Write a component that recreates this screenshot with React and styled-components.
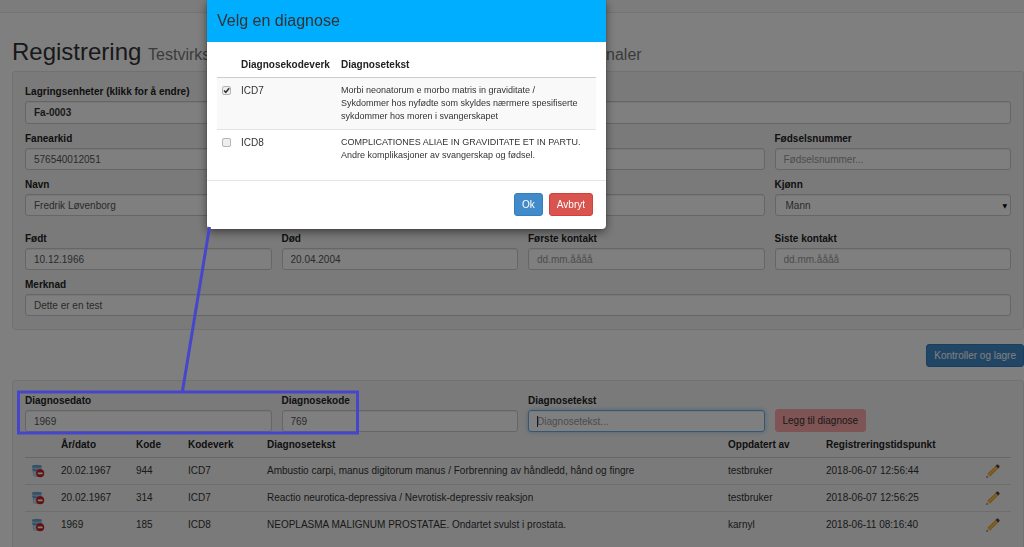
import React from 'react';
import styled, { createGlobalStyle, css } from 'styled-components';

const diagnoses = [
  {
    id: 1,
    date: '20.02.1967',
    code: '944',
    system: 'ICD7',
    text: 'Ambustio carpi, manus digitorum manus / Forbrenning av håndledd, hånd og fingre',
    user: 'testbruker',
    time: '2018-06-07 12:56:44',
  },
  {
    id: 2,
    date: '20.02.1967',
    code: '314',
    system: 'ICD7',
    text: 'Reactio neurotica-depressiva / Nevrotisk-depressiv reaksjon',
    user: 'testbruker',
    time: '2018-06-07 12:56:25',
  },
  {
    id: 3,
    date: '1969',
    code: '185',
    system: 'ICD8',
    text: 'NEOPLASMA MALIGNUM PROSTATAE. Ondartet svulst i prostata.',
    user: 'karnyl',
    time: '2018-06-11 08:16:40',
  },
];

const choices = [
  {
    system: 'ICD7',
    lines: [
      'Morbi neonatorum e morbo matris in graviditate /',
      'Sykdommer hos nyfødte som skyldes nærmere spesifiserte',
      'sykdommer hos moren i svangerskapet',
    ],
    checked: true,
  },
  {
    system: 'ICD8',
    lines: ['COMPLICATIONES ALIAE IN GRAVIDITATE ET IN PARTU.', 'Andre komplikasjoner av svangerskap og fødsel.'],
    checked: false,
  },
];

const TextField = ({ id, label, span, strong, focused, ...rest }) => (
  <Field $span={span}>
    <Label htmlFor={id}>{label}</Label>
    <InputWrap $caret={focused}>
      <Input id={id} $strong={strong} $focused={focused} {...rest} />
    </InputWrap>
  </Field>
);

const DeleteIcon = () => (
  <svg width='14' height='14' viewBox='0 0 14 14' aria-hidden='true'>
    <path d='M1 2.3 C1 .4 10.8 .4 10.8 2.3 L10.2 11.5 C10 13.4 2.4 13.4 2.2 11.8 Z' fill='#a9c6d8' />
    <ellipse cx='5.9' cy='2.3' rx='4.9' ry='1.5' fill='#6aa6d0' />
    <path d='M1.4 4.8 C4 5.9 8 5.9 10.6 4.8 V6.4 C8 7.4 4 7.4 1.6 6.4 Z' fill='#5f9bc8' />
    <path d='M3.4 7.8 L4 12' stroke='#dce9f0' strokeWidth='1' />
    <circle cx='9.2' cy='9.3' r='4' fill='#cc2222' />
    <rect x='6.8' y='8.4' width='4.8' height='1.8' rx='.4' fill='#fff' />
  </svg>
);

const PencilIcon = () => (
  <svg width='14' height='14' viewBox='0 0 14 14' aria-hidden='true'>
    <path d='M.3 13.7 L1.4 9.8 L4.2 12.6 Z' fill='#f0dcc0' />
    <path d='M.3 13.7 L.8 12 L2 13.2 Z' fill='#333' />
    <path d='M1.4 9.8 L9.5 1.9 L12.2 4.6 L4.2 12.6 Z' fill='#eda52e' />
    <path d='M2.3 10.7 L10.4 2.8 L11.3 3.7 L3.2 11.6 Z' fill='#ffc95c' />
    <path d='M9.5 1.9 L10.9 .6 Q11.6 .1 12.3 .8 L13.3 1.8 Q14 2.5 13.4 3.3 L12.2 4.6 Z' fill='#5b4145' />
  </svg>
);

const App = () => {
  return (
    <>
      <GlobalStyle />
      <Page>
        <TopBar />
        <Content>
          <Title>
            Registrering <small>Testvirksomhet for registrering og avlevering av eldre pasientjournaler</small>
          </Title>
          <Panel as='form'>
            <FieldGrid>
              <TextField id='units' label='Lagringsenheter (klikk for å endre)' span={4} strong defaultValue='Fa-0003' />
              <TextField id='fileId' label='Fanearkid' span={3} defaultValue='576540012051' />
              <TextField id='birthNo' label='Fødselsnummer' placeholder='Fødselsnummer...' />
              <TextField id='name' label='Navn' span={3} defaultValue='Fredrik Løvenborg' />
              <Field>
                <Label htmlFor='gender'>Kjønn</Label>
                <SelectWrap>
                  <Select id='gender' defaultValue='Mann'>
                    <option>Mann</option>
                    <option>Kvinne</option>
                  </Select>
                </SelectWrap>
              </Field>
            </FieldGrid>
            <FieldGrid $spaced>
              <TextField id='born' label='Født' defaultValue='10.12.1966' />
              <TextField id='dead' label='Død' defaultValue='20.04.2004' />
              <TextField id='first' label='Første kontakt' placeholder='dd.mm.åååå' />
              <TextField id='last' label='Siste kontakt' placeholder='dd.mm.åååå' />
              <TextField id='note' label='Merknad' span={4} defaultValue='Dette er en test' />
            </FieldGrid>
          </Panel>
          <Actions>
            <Button $kind='primary'>Kontroller og lagre</Button>
          </Actions>
          <Panel>
            <FieldGrid>
              <TextField id='diagDate' label='Diagnosedato' defaultValue='1969' />
              <TextField id='diagCode' label='Diagnosekode' defaultValue='769' />
              <TextField id='diagText' label='Diagnosetekst' placeholder='Diagnosetekst...' focused />
              <AddCell>
                <Button $kind='add'>Legg til diagnose</Button>
              </AddCell>
            </FieldGrid>
            <DiagnosisTable>
              <colgroup>
                <col width='31' />
                <col width='75' />
                <col width='52' />
                <col width='79' />
                <col />
                <col width='98' />
                <col width='159' />
                <col width='31' />
              </colgroup>
              <thead>
                <tr>
                  <th />
                  <th>År/dato</th>
                  <th>Kode</th>
                  <th>Kodeverk</th>
                  <th>Diagnosetekst</th>
                  <th>Oppdatert av</th>
                  <th>Registreringstidspunkt</th>
                  <th />
                </tr>
              </thead>
              <tbody>
                {diagnoses.map((d) => (
                  <tr key={d.id}>
                    <td>
                      <IconButton aria-label='Slett'>
                        <DeleteIcon />
                      </IconButton>
                    </td>
                    <td>{d.date}</td>
                    <td>{d.code}</td>
                    <td>{d.system}</td>
                    <td>{d.text}</td>
                    <td>{d.user}</td>
                    <td>{d.time}</td>
                    <td>
                      <IconButton aria-label='Rediger'>
                        <PencilIcon />
                      </IconButton>
                    </td>
                  </tr>
                ))}
              </tbody>
            </DiagnosisTable>
          </Panel>
        </Content>
      </Page>
      <Backdrop>
        <Dialog role='dialog' aria-labelledby='dialogTitle'>
          <DialogHeader>
            <h4 id='dialogTitle'>Velg en diagnose</h4>
          </DialogHeader>
          <DialogBody>
            <ChoiceTable>
              <colgroup>
                <col width='19' />
                <col width='100' />
                <col />
              </colgroup>
              <thead>
                <tr>
                  <th />
                  <th>Diagnosekodeverk</th>
                  <th>Diagnosetekst</th>
                </tr>
              </thead>
              <tbody>
                {choices.map((c) => (
                  <tr key={c.system}>
                    <td>
                      <Checkbox type='checkbox' id={c.system} defaultChecked={c.checked} />
                    </td>
                    <td>
                      <label htmlFor={c.system}>{c.system}</label>
                    </td>
                    <td>
                      {c.lines.map((line) => (
                        <ChoiceLine key={line}>{line}</ChoiceLine>
                      ))}
                    </td>
                  </tr>
                ))}
              </tbody>
            </ChoiceTable>
          </DialogBody>
          <DialogFooter>
            <Button $kind='primary'>Ok</Button>
            <Button $kind='danger'>Avbryt</Button>
          </DialogFooter>
        </Dialog>
      </Backdrop>
      <Marker width='360' height='440' viewBox='0 0 360 440' aria-hidden='true'>
        <path d='M209.5 227 L182.5 391' />
        <rect x='18.5' y='392' width='339' height='41' />
      </Marker>
    </>
  );
};

export default App;

const GlobalStyle = createGlobalStyle`
  * {
    box-sizing: border-box;
  }

  body {
    margin: 0;
    overflow: hidden;
    background-color: #fff;
    color: #333;
    font-family: 'Liberation Sans', Arial, sans-serif;
    font-size: 10px;
    line-height: 13px;
  }

  button, input, select {
    font: inherit;
  }
`;

const Page = styled.div`
  display: flex;
  flex-direction: column;
  min-height: 100vh;
`;

const TopBar = styled.nav`
  height: 13px;
  background-color: #f8f8f8;
  border-bottom: 1px solid #e7e7e7;
`;

const Content = styled.main`
  padding-left: 12px;
`;

const Title = styled.h1`
  margin: 26px 0 3px;
  font-size: 24px;
  font-weight: 400;
  line-height: 26px;
  white-space: nowrap;

  small {
    color: #777;
    font-size: 16px;
  }
`;

const Panel = styled.section`
  display: block;
  padding: 13px 12px;
  background-color: #f5f5f5;
  border: 1px solid #e3e3e3;
  border-radius: 3px;
`;

const FieldGrid = styled.div`
  display: grid;
  grid-template-columns: 25% 1fr 1fr 1fr;
  gap: 8px 10px;
  margin-top: ${({ $spaced }) => ($spaced ? '16px' : '0')};
`;

const Field = styled.div`
  display: flex;
  flex-direction: column;
  gap: 3px;
  min-width: 0;
  grid-column: span ${({ $span }) => $span || 1};
`;

const Label = styled.label`
  color: #222;
  font-weight: 700;
`;

const InputWrap = styled.div`
  position: relative;
  display: flex;

  ${({ $caret }) =>
    $caret &&
    css`
      &::before {
        content: '';
        position: absolute;
        left: 9px;
        top: 6px;
        width: 1px;
        height: 11px;
        background-color: #333;
      }
    `}
`;

const control = css`
  width: 100%;
  height: 22px;
  padding: 0 8px;
  background-color: #fff;
  border: 1px solid #ccc;
  border-radius: 3px;
  box-shadow: inset 0 1px 1px rgba(0, 0, 0, 0.075);
  color: #555;
  outline: none;
`;

const Input = styled.input`
  ${control}

  &::placeholder {
    color: #999;
    opacity: 1;
  }

  ${({ $strong }) =>
    $strong &&
    css`
      height: 23px;
      color: #333;
      font-weight: 700;
    `}

  ${({ $focused }) =>
    $focused &&
    css`
      border-color: #66afe9;
      box-shadow: inset 0 1px 1px rgba(0, 0, 0, 0.075), 0 0 5px rgba(102, 175, 233, 0.6);
    `}
`;

const SelectWrap = styled.div`
  position: relative;
  display: flex;

  &::after {
    content: '▼';
    position: absolute;
    right: 4px;
    top: 5px;
    color: #000;
    font-family: 'DejaVu Sans', sans-serif;
    font-size: 6px;
    pointer-events: none;
  }
`;

const Select = styled.select`
  ${control}
  padding-left: 10px;
  appearance: none;
`;

const buttonKinds = {
  primary: css`
    background-color: #428bca;
    border-color: #357ebd;
    color: #fff;
  `,
  danger: css`
    background-color: #d9534f;
    border-color: #d43f3a;
    color: #fff;
  `,
  add: css`
    background-color: #ffa8a8;
    border-color: #ffa8a8;
    color: #333;
  `,
};

const Button = styled.button.attrs({ type: 'button' })`
  height: 23px;
  padding: 0 7px;
  border: 1px solid transparent;
  border-radius: 3px;
  white-space: nowrap;
  cursor: pointer;
  ${({ $kind }) => buttonKinds[$kind]}
`;

const Actions = styled.div`
  display: flex;
  justify-content: flex-end;
  padding: 14px 0 13px;
`;

const AddCell = styled.div`
  display: flex;
  align-items: flex-end;
`;

const DiagnosisTable = styled.table`
  width: 100%;
  table-layout: fixed;
  border-collapse: collapse;

  th,
  td {
    height: 27px;
    padding: 0 5px;
    text-align: left;
    white-space: nowrap;
  }

  th {
    height: 25px;
    color: #222;
    border-bottom: 1px solid #ccc;
  }

  tr + tr td {
    border-top: 1px solid #ddd;
  }
`;

const IconButton = styled.button.attrs({ type: 'button' })`
  display: flex;
  padding: 0 0 0 1px;
  border: none;
  background: none;
  cursor: pointer;
`;

const Backdrop = styled.div`
  position: fixed;
  inset: 0;
  display: flex;
  align-items: flex-start;
  padding-left: 207px;
  background-color: rgba(0, 0, 0, 0.5);
`;

const Dialog = styled.div`
  width: 399px;
  background-color: #fff;
  border-radius: 0 0 4px 4px;
  box-shadow: 0 3px 10px rgba(0, 0, 0, 0.5), 0 0 1px rgba(0, 0, 0, 0.6);
`;

const DialogHeader = styled.div`
  padding: 10px;
  background-color: #00aeff;

  h4 {
    margin: 0;
    font-size: 16px;
    font-weight: 400;
    line-height: 22px;
  }
`;

const DialogBody = styled.div`
  padding: 10px 10px 12px;
`;

const ChoiceTable = styled.table`
  width: 100%;
  table-layout: fixed;
  border-collapse: collapse;

  th,
  td {
    padding: 6px 0 6px 5px;
    text-align: left;
    vertical-align: top;
  }

  th {
    color: #222;
    border-bottom: 1px solid #ccc;
  }

  td {
    border-bottom: 1px solid #e4e4e4;
  }

  tbody tr:first-child {
    background-color: #f9f9f9;
  }

  tbody tr:last-child td {
    border-bottom: none;
  }
`;

const ChoiceLine = styled.div`
  font-size: 9px;
  white-space: nowrap;
`;

const Checkbox = styled.input`
  display: block;
  width: 9px;
  height: 9px;
  margin: 2px 0 0;
  appearance: none;
  background-color: #eee;
  border: 1px solid #b4b4b4;
  border-radius: 2px;

  &:checked {
    background-image: url("data:image/svg+xml,%3Csvg xmlns='http://www.w3.org/2000/svg' viewBox='0 0 7 7'%3E%3Cpath d='M1 3.5 L2.8 5.3 L6.2 1.2' fill='none' stroke='%23333' stroke-width='1.6'/%3E%3C/svg%3E");
  }
`;

const DialogFooter = styled.div`
  display: flex;
  justify-content: flex-end;
  gap: 6px;
  padding: 12px 13px 13px;
  border-top: 1px solid #e5e5e5;
`;

// hand-drawn callout between the dialog and the diagnosis fields
const Marker = styled.svg`
  position: absolute;
  top: 0;
  left: 0;
  fill: none;
  stroke: #4646cc;
  stroke-width: 3;
  pointer-events: none;
`;
